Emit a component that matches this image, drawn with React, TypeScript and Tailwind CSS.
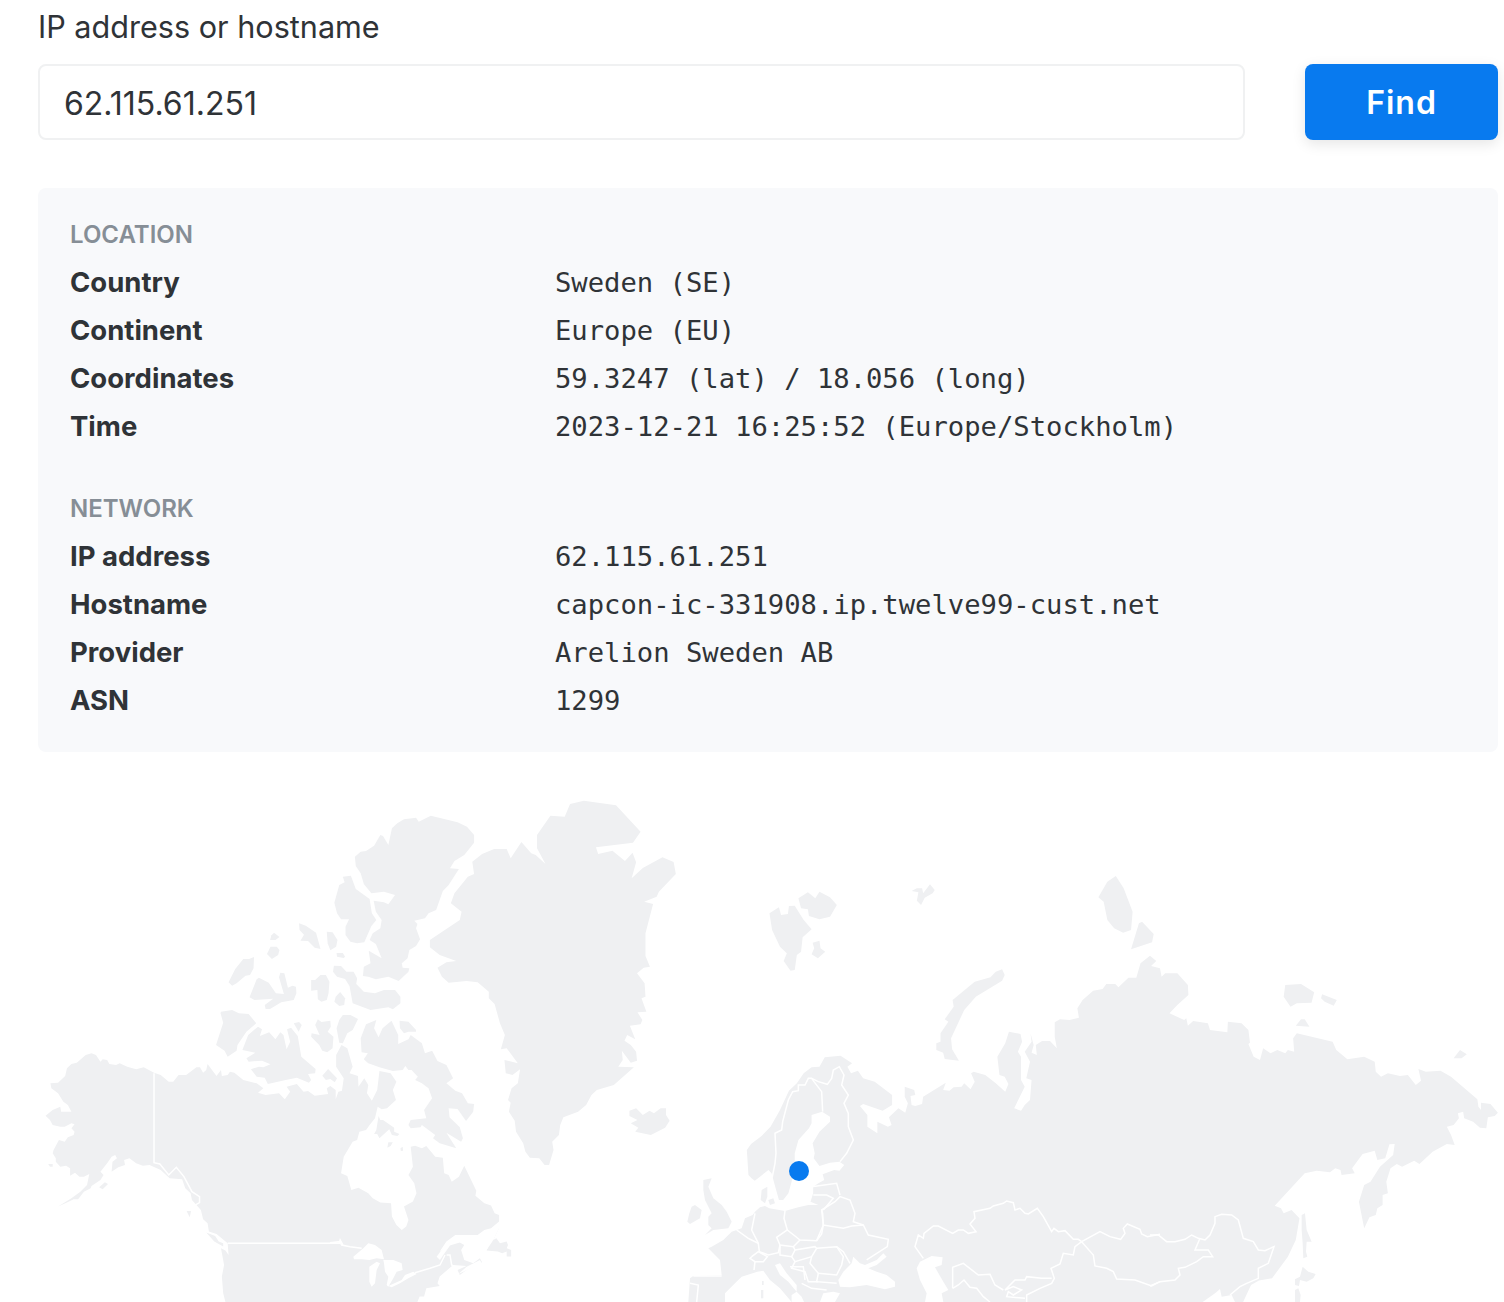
const LEFT_LAND = [
  // greenland
  "1308,62 1380,76 1435,155 1418,188 1335,202 1340,222 1372,212 1400,243 1417,218 1425,247 1415,295 1440,264 1484,232 1509,246 1514,282 1476,335 1471,350 1443,365 1463,372 1446,460 1446,528 1456,560 1442,563 1427,580 1444,610 1446,650 1437,655 1448,695 1428,697 1439,720 1435,733 1411,737 1423,778 1405,765 1399,782 1413,795 1425,815 1427,842 1413,848 1393,812 1395,840 1385,860 1420,862 1375,915 1337,930 1325,945 1313,975 1295,995 1262,1012 1255,1035 1252,1065 1237,1085 1240,1110 1230,1155 1220,1155 1208,1135 1187,1133 1177,1115 1172,1090 1156,1055 1153,1022 1140,995 1144,968 1138,960 1146,925 1160,910 1165,868 1148,885 1133,880 1130,840 1160,850 1135,805 1122,808 1131,765 1120,730 1108,672 1095,655 1095,635 1070,607 1045,603 1005,608 990,590 980,563 1000,547 1022,543 985,525 963,502 963,480 1030,420 1034,395 1010,370 1018,340 1048,290 1062,282 1058,245 1080,222 1107,207 1135,207 1144,235 1168,186 1190,220 1200,225 1222,252 1203,205 1203,165 1233,107 1265,110 1277,72",
  // ellesmere
  "965,107 1025,127 1046,140 1062,165 1062,188 1040,225 1018,243 1008,265 1028,267 1005,315 992,333 977,390 960,400 952,415 928,422 935,432 932,445 941,478 932,498 917,510 913,535 900,550 902,563 917,565 915,575 893,603 870,590 842,598 825,590 813,588 815,560 830,550 826,512 855,535 842,492 828,480 835,460 852,445 855,420 842,395 837,362 860,367 870,373 885,345 860,335 832,340 815,312 808,280 797,258 795,230 808,215 820,213 838,197 852,165 858,168 870,195 878,145 890,130 905,118 932,113 938,125",
  "768,290 786,287 797,327 828,357 833,400 843,420 832,438 816,487 800,490 785,485 774,465 774,440 782,418 764,418 755,400 749,368 760,315 772,307",
  "614,458 626,471 617,480 605,480 608,466",
  "606,500 620,500 626,510 623,525 609,537 598,522",
  "670,430 685,437 708,458 718,507 705,503 690,483 673,482 681,464 671,450",
  "732,455 745,457 756,480 753,500 740,511 734,490",
  "754,519 768,519 773,530 770,534 755,530",
  "545,537 558,537 569,531 568,565 560,585 550,587 530,610 520,617 512,607 527,567",
  "748,557 764,558 776,575 792,575 800,595 798,612 815,635 840,640 860,630 885,630 897,650 897,670 880,688 870,682 830,690 790,670 783,618 773,597 755,590 746,575",
  "628,578 637,580 645,623 655,617 663,620 664,640 658,660 630,667 605,687 595,687 593,675 612,656 570,660 559,652 575,598 580,593 602,608 618,640 636,642 625,592",
  "718,585 730,585 738,605 736,640 732,660 720,665 712,658 711,630 697,632 697,600 706,600",
  "762,636 773,655 771,675 760,678 749,665 752,650",
  "495,695 520,690 535,700 557,702 574,730 552,755 532,795 530,812 510,830 503,812 484,795 500,728 494,700",
  "768,705 785,705 802,717 790,750 778,760 768,790 760,788 754,745 760,720",
  "658,730 670,726 676,735 669,755",
  "712,718 720,726 740,722 741,740 734,755 747,770 745,805 733,817 722,812 715,795 697,770 698,760 716,765 706,735",
  "895,722 915,725 932,750 932,755 915,755 905,760 896,745",
  // victoria
  "578,740 587,748 582,768 603,757 617,778 628,757 635,765 642,808 650,785 643,748 652,743 667,768 675,830 707,867 706,880 690,882 697,900 692,908 665,893 640,900 600,912 593,893 575,890 562,868 580,860 590,862 606,853 587,842 557,845 552,835 572,818 543,810 556,765",
  // baffin
  "843,720 838,745 848,772 857,745 877,722 892,765 892,792 915,778 920,765 945,790 952,820 968,812 980,843 1000,855 1015,895 1000,910 1020,932 1035,940 1048,970 1062,972 1060,995 1044,1023 1025,987 1005,985 1007,1012 1030,1042 1037,1075 1033,1085 1000,1058 1022,1105 985,1090 970,1075 975,1065 945,1035 942,1042 920,1045 915,1035 920,1020 955,1015 950,990 968,955 960,925 945,910 930,900 936,890 922,870 915,870 908,858 902,870 880,873 850,862 825,850 815,838 824,820 810,817 808,775 820,733",
  "735,867 755,895 750,907 740,897 730,900 722,887",
  "848,1008 852,1020 858,1020 883,1043 883,1055 895,1062 890,1068 878,1065 872,1048 850,1075 845,1062 838,1062 843,1050",
  "868,1100 870,1087 880,1087 875,1098 868,1103",
  "897,1105 902,1100 903,1112 898,1113",
  "418,1293 428,1293 425,1312",
  "462,1358 482,1368 490,1385 500,1390 500,1400 480,1385",
  "222,1222 235,1207 242,1212 230,1228",
  "108,1152 118,1152 118,1160 112,1160",
  // iceland
  "1410,992 1425,985 1440,1005 1455,992 1465,1000 1480,985 1492,985 1492,1005 1500,1022 1490,1043 1458,1065 1423,1055 1430,1043 1413,1030 1428,1020 1410,1008",
  // newfoundland
  "1118,1345 1105,1380 1112,1375 1120,1390 1135,1385 1138,1395 1135,1405 1145,1410 1145,1430 1135,1430 1135,1415 1125,1420 1115,1415 1090,1412 1095,1395 1100,1380 1108,1355",
  // north america
  "113,910 130,908 146,888 150,865 160,852 172,848 192,825 205,820 215,825 225,845 230,838 240,840 245,852 260,855 268,850 285,860 305,868 322,862 345,878 360,885 378,905 388,905 400,885 417,885 440,862 448,862 455,878 462,870 465,852 485,888 495,870 497,888 510,885 515,875 525,878 545,900 575,910 590,925 578,938 595,945 625,940 638,958 650,935 642,920 665,912 680,935 690,933 705,947 735,942 732,925 740,918 752,930 752,958 758,935 766,932 770,895 753,860 753,825 765,795 778,805 790,860 783,880 802,888 803,920 816,895 825,915 822,940 833,962 845,930 850,873 875,880 888,905 880,930 887,960 867,985 855,988 846,980 840,1015 828,1035 820,1050 805,1055 800,1080 790,1085 770,1130 764,1180 778,1188 787,1230 803,1223 825,1240 835,1255 852,1268 876,1270 878,1310 888,1335 900,1350 910,1340 915,1320 905,1280 925,1265 933,1240 928,1210 915,1185 925,1160 920,1100 930,1097 945,1105 955,1098 975,1130 992,1133 995,1180 1005,1185 1012,1205 1028,1190 1040,1157 1067,1232 1065,1247 1085,1270 1100,1277 1108,1300 1118,1305 1118,1325 1100,1345 1085,1350 1070,1365 1020,1365 1000,1385 985,1415 1000,1400 1030,1388 1040,1395 1033,1410 1040,1440 1060,1450 1075,1435 1080,1447 1045,1470 1030,1485 1025,1470 1045,1458 1015,1455 985,1490 980,1510 985,1518 955,1525 950,1550 940,1550 935,1566 505,1566 500,1540 497,1490 502,1455 495,1405 505,1412 512,1425 510,1390 485,1362 468,1355 465,1330 455,1318 450,1290 440,1275 430,1260 427,1240 415,1225 408,1198 380,1195 360,1170 335,1155 320,1157 305,1150 290,1135 278,1140 280,1155 265,1162 250,1175 252,1145 262,1135 258,1125 250,1130 240,1150 225,1175 232,1185 225,1200 205,1218 203,1225 188,1235 175,1258 165,1258 150,1268 130,1280 160,1255 180,1235 195,1215 200,1182 188,1190 178,1190 168,1178 157,1187 157,1165 148,1157 135,1160 125,1145 125,1135 118,1120 120,1110 132,1080 145,1085 152,1072 165,1065 167,1055 160,1045 167,1033 160,1030 145,1040 135,1040 118,1035 112,1020 102,1007 118,990 135,980 137,995 160,995 152,975 142,965 130,940 115,925",
];

const RIGHT_LAND = [
  // svalbard
  "170,160 188,142 192,165 205,162 207,138 218,137 235,180 250,208 233,232 230,275 222,285 218,330 210,332 197,303 203,280 190,260 175,210",
  "225,115 243,97 257,115 265,95 285,112 298,135 285,170 265,178 245,168 243,148 230,145",
  "252,248 265,242 267,265 276,275 262,295 250,283 255,265",
  "440,93 450,85 460,85 462,100 475,73 484,90 480,100 465,113 458,135 450,122 453,97",
  "795,112 812,65 828,48 843,85 860,155 857,210 842,218 825,205 812,180 805,125",
  "872,190 878,185 900,222 897,247 857,268",
  // novaya zemlya
  "612,328 617,345 612,362 562,410 540,450 515,535 517,568 530,602 503,597 500,578 487,570 487,550 495,545 495,520 510,485 503,478 520,440 518,420 560,365 590,352 600,335",
  "1150,375 1180,372 1205,397 1200,428 1172,430 1160,440 1147,410",
  "1220,403 1248,420 1242,437 1225,425 1218,415",
  "1180,478 1187,478 1196,500 1170,497",
  "1472,590 1482,570 1495,583 1485,595 1470,595",
  // eurasia
  "275,592 305,587 327,610 318,620 325,640 338,632 348,655 370,665 403,705 403,735 385,752 348,732 342,738 356,765 356,800 375,820 375,785 395,800 402,795 397,772 415,745 428,758 433,730 427,710 427,680 445,690 447,705 438,708 440,735 447,738 460,732 462,710 505,668 500,690 512,692 520,682 535,680 540,670 552,688 560,665 553,640 558,635 580,645 600,670 618,695 624,672 617,650 607,645 603,590 618,550 625,515 647,522 650,545 642,575 648,590 648,660 655,680 635,745 648,752 655,735 665,720 668,660 658,655 665,605 655,575 668,545 666,520 672,555 668,578 678,585 676,555 688,543 703,543 716,565 712,530 712,487 722,478 740,480 758,473 755,445 765,420 785,392 803,387 810,372 827,372 833,382 852,353 867,353 875,310 893,287 905,303 895,318 912,325 915,350 922,340 945,340 965,375 966,405 945,435 930,460 958,480 962,475 965,497 975,483 1003,490 1007,510 1040,517 1041,485 1067,490 1080,510 1083,548 1080,552 1090,590 1102,600 1108,565 1122,580 1135,570 1150,580 1155,570 1167,575 1165,535 1172,520 1240,545 1247,570 1268,598 1300,590 1320,605 1322,635 1332,650 1345,640 1368,648 1383,645 1398,675 1408,662 1403,627 1417,635 1445,632 1465,650 1515,718 1517,740 1522,750 1522,728 1540,732 1554,758 1548,768 1535,772 1532,805 1520,803 1507,785 1490,775 1488,755 1478,760 1480,775 1470,795 1457,800 1465,825 1472,855 1457,852 1430,875 1405,912 1395,902 1372,920 1362,912 1350,925 1342,965 1345,1000 1335,1005 1335,1035 1325,1045 1322,1065 1310,1072 1300,1105 1290,1025 1300,975 1312,965 1330,920 1355,885 1358,852 1348,853 1340,895 1325,900 1320,872 1297,882 1277,925 1282,940 1257,945 1255,930 1245,925 1235,937 1210,932 1187,940 1130,1037 1142,1045 1147,1060 1162,1050 1177,1075 1170,1140 1155,1190 1125,1255 1100,1262 1085,1275 1070,1326 263,1326 263,1035 248,1025 253,1000 253,980 263,970 274,960 271,943 293,930 303,932 312,915 303,905 285,908 265,918 254,895 256,880 252,850 265,815 285,785 285,770 270,755 250,765 250,790 245,805 225,840 218,880 218,920 212,965 206,1000 196,1020 188,1020 180,975 174,940 168,930 152,950 142,962 136,955 130,945 127,870 135,852 155,828 172,800 190,750 207,692 222,670 235,640 250,622 265,620",
];

// europe + islands, 3x of the real pixels
const EUROPE_LAND = [
  "315,183 285,178 268,175 255,168 240,172 225,185 218,195 195,205 185,235 170,240 155,245 130,270 95,290 85,295 105,315 120,330 125,375 40,378 30,385 25,456 135,456 135,430 165,400 185,380 232,365 250,362 270,390 300,415 335,456 450,456 450,165 415,165 385,165 355,172",
  "70,90 95,85 85,110 100,145 125,165 140,185 155,215 145,235 100,240 75,255 95,235 85,225 85,200 95,190 75,150 70,120",
  "35,170 45,165 65,180 60,205 30,222 22,215 28,190",
  "245,120 262,110 262,140 255,160 242,150",
  "265,150 280,145 285,160 270,165",
  "246,393 251,393 251,405 246,405",
  "243,420 250,420 250,445 243,445",
];

const EUROPE_WATER = [
  "285,345 300,340 320,370 350,405 350,425 325,395 300,375",
  "475,390 490,365 515,340 520,320 540,340 555,345 590,330 610,310 620,320 590,345 565,355 590,365 620,375 645,395 645,410 615,418 560,405 510,412 480,410",
  "335,435 350,425 365,440 372,456 335,456",
  "420,456 430,430 460,425 480,430 465,456",
];

const EUROPE_BORDERS = [
  "315,183 312,205 322,240 345,258 360,270 410,272 425,252 430,225 428,190 425,180",
  "225,190 215,240 235,280 238,305 265,315 295,308 300,285",
  "322,240 290,262 300,285 340,290 360,270",
  "340,290 345,300 335,320 300,315 300,285",
  "215,320 235,305 262,320 250,335 225,335 210,325 215,320",
  "225,335 222,360",
  "345,300 405,290 410,295 395,320 345,335 335,320",
  "410,272 430,225 490,235 515,228 550,225 565,255 625,268 622,290 560,330",
  "410,295 470,290 490,305 510,340",
  "395,320 390,340 415,370 470,375 485,345 490,320 470,290",
  "430,225 425,180 465,155 480,140 510,150 525,190 520,215 550,225",
  "400,135 440,135 460,145 430,180",
  "395,110 470,100 480,135",
  "170,240 205,265 215,270 235,280",
  "415,370 410,395 470,400",
  "345,335 335,355 375,365 385,395 415,395",
  "330,350 370,350 375,390",
  "365,400 395,415 440,420",
  "30,400 55,405 50,456",
  "40,378 125,378",
];

const ASIA_WATER = [
  "20,265 30,245 65,228 98,232 95,255 75,262 100,305 115,330 95,340 100,366 45,366 50,340 30,300",
];

const ASIA_BORDERS = [
  "40,235 15,200 25,165 40,175 42,160 70,138 85,138 128,160 145,150 160,150 175,160 198,155 180,132 195,115 192,95 240,85 250,78 280,70 290,63 310,68 315,90 330,85 345,100 355,102 382,85 400,110 425,155 432,145 445,155 465,152 490,178 505,178 515,185",
  "515,185 495,200 490,225 460,220 450,252 423,265 433,295 425,310 390,325 350,345 350,366",
  "425,295 395,295 350,290 345,300 315,300 285,330 310,320 335,330 310,345 295,335 290,350 345,355",
  "128,325 128,262 160,250 205,285 240,283 255,315 280,330",
  "128,325 145,315 162,300 180,322 200,325 220,350 240,366",
  "515,185 570,155 600,170 632,178 645,160 640,145 652,132 690,148 695,162 712,170 750,163",
  "515,185 550,225 555,258 590,265 610,275 620,297 675,300 725,318 750,305",
];

const EAST_ASIA_WATER = [
  "158,366 195,340 210,327 215,350 245,345 255,366",
];

const EAST_ASIA_LAND = [
  "455,105 465,100 470,150 485,185 470,185 468,215 472,230 460,235 458,190 455,150",
  "458,260 475,275 497,282 490,295 470,305 450,300 447,318 435,315 435,298 450,290",
  "435,330 445,325 452,345 450,366 435,366",
];

const EAST_ASIA_BORDERS = [
  "0,165 25,165 50,185 75,185 105,178 125,165 145,175 165,180 180,165 195,130 195,110 215,103 245,105 265,120 280,175 310,185 325,210 345,212 372,200 355,250 325,265 325,295 290,310 270,320 240,345",
  "0,318 30,305 75,300 90,285 85,265 105,262 140,245 160,230 188,230 175,210 135,210 150,175",
];

const NORDIC_BORDERS = [
  "95,390 105,340 108,310 105,250 125,240 128,215 145,150 158,125 175,122 175,105 195,105 205,85 215,85 222,95 245,125 248,185",
  "215,85 235,95 262,103 275,85 280,60 298,50 312,75 305,105 325,135 312,160 325,190 325,230 340,270 320,310 300,335",
];

const CANADA_WATER = [
  "70,170 100,145 115,130 135,135 155,150 162,178 140,175 118,180 95,178 72,178",
  "118,200 140,185 150,190 140,210 135,250 125,260 118,245",
  "160,180 190,180 215,190 218,210 200,215 190,235 175,260 170,255 175,230 165,215 162,190",
  "175,258 215,240 225,225 250,215 260,222 235,235 210,250 185,262",
  "320,170 345,135 380,110 440,108 480,95 510,80 490,120 470,150 465,125 440,115 400,125 365,130 340,165 330,180",
  "385,222 410,200 450,180 455,190 400,215",
];

const CANADA_LINES = [
  "0,128 30,125 35,135 60,140 95,145",
  "255,218 300,205 330,195 345,165",
  "350,165 360,165 365,195 385,205",
];

const NA_BORDERS = [
  "345,880 345,1148 358,1152 378,1185 395,1162 412,1190 430,1235 447,1250 447,1268 438,1275",
  "510,1390 760,1390 762,1380 768,1395",
];

function Polys({ points, fill }: { points: string[]; fill: string }) {
  return (
    <>
      {points.map((p) => (
        <polygon key={p} points={p} fill={fill} />
      ))}
    </>
  );
}

function Lines({ points }: { points: string[] }) {
  return (
    <>
      {points.map((p) => (
        <polyline key={p} points={p} fill="none" stroke="#ffffff" strokeWidth="1.5" vectorEffect="non-scaling-stroke" />
      ))}
    </>
  );
}

function WorldMap() {
  const land = "#eff0f2";
  return (
    <svg viewBox="0 780 1504 522" className="block w-[1504px] h-[522px]">
      <g transform="translate(0 780) scale(0.4464 0.3333)">
        <Polys points={LEFT_LAND} fill={land} />
        <polygon points="925,945 935,928 943,945 937,960 928,960" fill="#ffffff" />
        <Lines points={NA_BORDERS} />
      </g>
      <g transform="translate(680 860) scale(0.5263 0.3333)">
        <Polys points={RIGHT_LAND} fill={land} />
      </g>
      <g transform="translate(680 1150) scale(0.3333)">
        <Polys points={EUROPE_LAND} fill={land} />
        <Polys points={EUROPE_WATER} fill="#ffffff" />
        <Lines points={EUROPE_BORDERS} />
      </g>
      <g transform="translate(910 1180) scale(0.3333)">
        <Polys points={ASIA_WATER} fill="#ffffff" />
        <Lines points={ASIA_BORDERS} />
      </g>
      <g transform="translate(1150 1180) scale(0.3333)">
        <Polys points={EAST_ASIA_WATER} fill="#ffffff" />
        <Polys points={EAST_ASIA_LAND} fill={land} />
        <Lines points={EAST_ASIA_BORDERS} />
      </g>
      <g transform="translate(740 1050) scale(0.3333)">
        <Lines points={NORDIC_BORDERS} />
      </g>
      <g transform="translate(330 1200) scale(0.3333)">
        <Polys points={CANADA_WATER} fill="#ffffff" />
        <Lines points={CANADA_LINES} />
      </g>
      <circle cx="799" cy="1171" r="10" fill="#087aef" />
    </svg>
  );
}

function InfoRow({ label, value }: { label: string; value: string }) {
  return (
    <div className="grid grid-cols-[485px_1fr] h-12 pt-0.5 items-center">
      <div className="text-[27.5px] font-bold text-[#2f3337]">{label}</div>
      <div className="text-[27.2px] text-[#2f3337] font-['DejaVu_Sans_Mono',monospace]">{value}</div>
    </div>
  );
}

function Heading({ children }: { children: string }) {
  return <div className="h-12 pt-0.5 flex items-center text-[24px] font-semibold text-[#868e96]">{children}</div>;
}

export default function App() {
  return (
    <div className="w-[1504px] h-[1302px] overflow-hidden bg-white font-['Inter',sans-serif]">
      <div className="pl-[38px] pr-[6px] pt-[7px]">
        <label className="block h-10 leading-10 text-[30.6px] text-[#2f3337]">IP address or hostname</label>
        <div className="flex gap-[60px] mt-[17px]">
          <input
            readOnly
            value="62.115.61.251"
            className="w-[1207px] h-[76px] pl-6 pr-6 pt-0.5 border-2 border-[#f0f1f2] rounded-lg text-[32px] text-[#2f3337] outline-none"
          />
          <button className="flex-1 h-[76px] pt-0.5 rounded-lg bg-[#087aef] text-white text-[32px] font-semibold tracking-[1px] shadow-[0_4px_14px_rgba(0,0,0,0.1)]">
            Find
          </button>
        </div>
        <div className="mt-12 rounded-lg bg-[#f8f9fb] pt-[22px] pb-7 px-8">
          <Heading>LOCATION</Heading>
          <InfoRow label="Country" value="Sweden (SE)" />
          <InfoRow label="Continent" value="Europe (EU)" />
          <InfoRow label="Coordinates" value="59.3247 (lat) / 18.056 (long)" />
          <InfoRow label="Time" value="2023-12-21 16:25:52 (Europe/Stockholm)" />
          <div className="mt-[34px]">
            <Heading>NETWORK</Heading>
          </div>
          <InfoRow label="IP address" value="62.115.61.251" />
          <InfoRow label="Hostname" value="capcon-ic-331908.ip.twelve99-cust.net" />
          <InfoRow label="Provider" value="Arelion Sweden AB" />
          <InfoRow label="ASN" value="1299" />
        </div>
      </div>
      <div className="mt-7">
        <WorldMap />
      </div>
    </div>
  );
}
